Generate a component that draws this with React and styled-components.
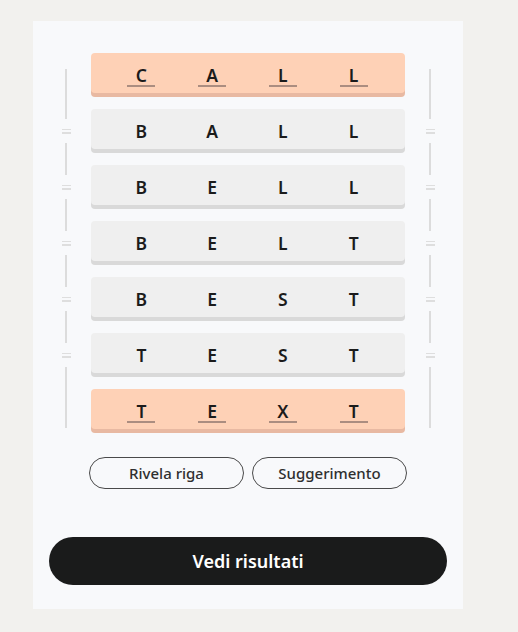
import React from "react";
import styled, { createGlobalStyle } from "styled-components";

const Global = createGlobalStyle`
  html, body { margin: 0; padding: 0; background: #f2f1ee; }
  body { font-family: "Noto Sans", "Open Sans", sans-serif; }
`;

const Page = styled.div`
  padding: 21px 0 23px 33px;
`;

const Card = styled.div`
  width: 430px;
  box-sizing: border-box;
  background: #f8f9fb;
  padding: 32px 16px 24px;
  display: flex;
  flex-direction: column;
  align-items: center;
`;

const Board = styled.div`
  display: flex;
  gap: 17px;
  align-self: stretch;
  padding: 0 9px;
`;

const Rail = styled.div`
  width: 16px;
  display: flex;
  flex-direction: column;
  align-items: center;
  padding: 16px 0 5px;
`;

const Segment = styled.div`
  width: 2px;
  background: #dcdcdc;
  height: ${(p) => (p.$h ? `${p.$h}px` : "auto")};
  flex: ${(p) => (p.$h ? "none" : "1")};
`;

const Mark = styled.div`
  height: 24px;
  display: flex;
  flex-direction: column;
  justify-content: center;
  gap: 2px;
  & > span {
    display: block;
    width: 9px;
    height: 1.5px;
    background: #dedede;
  }
`;

const Rows = styled.div`
  width: 314px;
  display: flex;
  flex-direction: column;
  gap: 12px;
`;

const Row = styled.div`
  box-sizing: border-box;
  height: 40px;
  border-radius: 4px;
  background: ${(p) => (p.$hl ? "#fed1b6" : "#efefef")};
  box-shadow: 0 4px 0 ${(p) => (p.$hl ? "#e8b9a2" : "#d9d9d9")};
  margin-bottom: 4px;
  display: grid;
  grid-template-columns: repeat(4, 1fr);
  padding: 3px 16px 0 15px;
  align-items: center;
`;

const Letter = styled.span`
  position: relative;
  justify-self: center;
  font-size: 17.5px;
  font-weight: 600;
  color: #1b1b1b;
  line-height: 20px;
  ${(p) =>
    p.$hl &&
    `
    &::after {
      content: "";
      position: absolute;
      left: 50%;
      transform: translateX(-50%);
      bottom: -2px;
      width: 28px;
      height: 2px;
      background: #ab8d80;
    }
  `}
`;

const Actions = styled.div`
  display: flex;
  gap: 8px;
  margin-top: 24px;
`;

const Pill = styled.button`
  width: 155px;
  height: 32px;
  border: 1px solid #4a4a4a;
  border-radius: 16px;
  background: transparent;
  font-family: "Noto Sans", sans-serif;
  font-size: 15px;
  font-weight: 500;
  color: #2f2f2f;
  padding: 0;
`;

const Primary = styled.button`
  margin-top: 48px;
  align-self: stretch;
  height: 48px;
  border: none;
  border-radius: 24px;
  background: #1a1b1b;
  color: #ffffff;
  font-family: "Noto Sans", sans-serif;
  font-size: 18px;
  font-weight: 600;
`;

const words = [
  { w: "CALL", hl: true },
  { w: "BALL" },
  { w: "BELL" },
  { w: "BELT" },
  { w: "BEST" },
  { w: "TEST" },
  { w: "TEXT", hl: true },
];

function RailColumn() {
  return (
    <Rail>
      <Segment $h={50} />
      {[0, 1, 2, 3].map((i) => (
        <React.Fragment key={i}>
          <Mark>
            <span />
            <span />
          </Mark>
          <Segment $h={32} />
        </React.Fragment>
      ))}
      <Mark>
        <span />
        <span />
      </Mark>
      <Segment />
    </Rail>
  );
}

export default function App() {
  return (
    <>
      <Global />
      <Page>
        <Card>
          <Board>
            <RailColumn />
            <Rows>
              {words.map((r, i) => (
                <Row key={i} $hl={r.hl}>
                  {r.w.split("").map((c, j) => (
                    <Letter key={j} $hl={r.hl}>
                      {c}
                    </Letter>
                  ))}
                </Row>
              ))}
            </Rows>
            <RailColumn />
          </Board>
          <Actions>
            <Pill>Rivela riga</Pill>
            <Pill>Suggerimento</Pill>
          </Actions>
          <Primary>Vedi risultati</Primary>
        </Card>
      </Page>
    </>
  );
}
